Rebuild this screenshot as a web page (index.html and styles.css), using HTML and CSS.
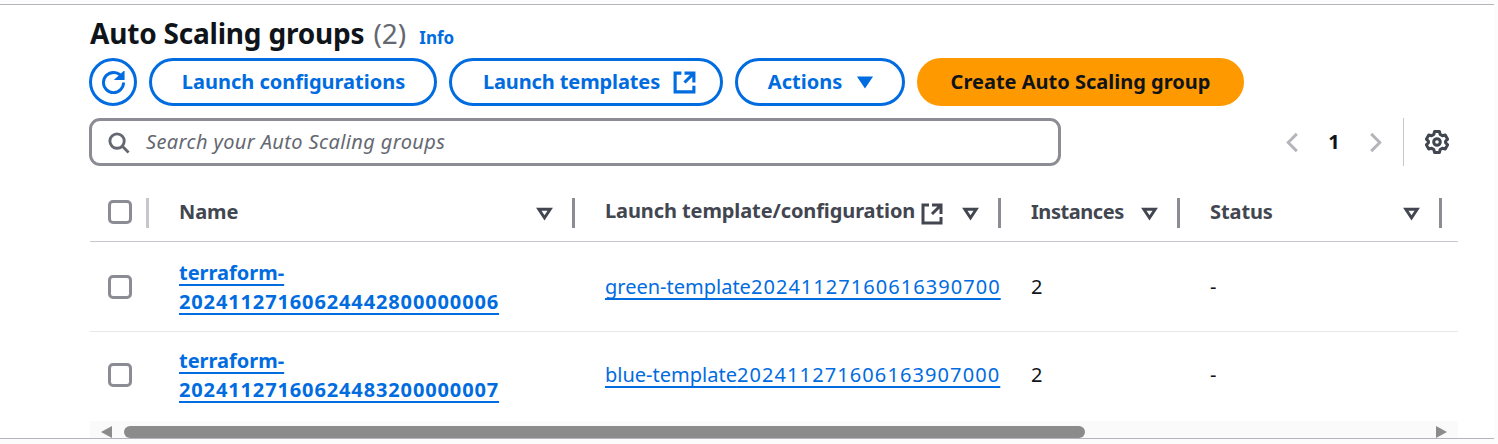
FILE: index.html
```html
<!DOCTYPE html>
<html lang="en">
<head>
<meta charset="utf-8">
<title>Auto Scaling groups</title>
<link rel="stylesheet" href="styles.css">
</head>
<body>
<main class="frame">
  <div class="content">
    <h1 class="title"><span>Auto Scaling groups</span> <span class="count">(2)</span><a class="info">Info</a></h1>
    <div class="actions">
      <button class="btn btn-icon" aria-label="Refresh">
        <svg class="icon" viewBox="0 0 16 16"><path d="M15 8c0 3.87-3.13 7-7 7s-7-3.13-7-7 3.13-7 7-7c2.79 0 5.2 1.63 6.33 4"/><path class="arrowhead" d="M15 1v4.600h-5z"/></svg>
      </button>
      <button class="btn btn-config">Launch configurations</button>
      <button class="btn btn-templates"><span class="tight">Launch templates</span>
        <svg class="icon ext-btn" viewBox="0 0 16 16"><path d="M14 8.01v-6H8M14.02 2 8 8.01M6 2.01H2v12h12v-3.99"/></svg>
      </button>
      <button class="btn btn-actions">Actions
        <svg class="icon icon-fill caret" viewBox="0 0 16 16"><path d="M4 5h8l-4 6-4-6z"/></svg>
      </button>
      <button class="btn btn-primary">Create Auto Scaling group</button>
    </div>
    <div class="tools">
      <label class="search">
        <svg class="icon search-icon" viewBox="0 0 16 16"><circle cx="7" cy="7" r="5"/><path d="m15 15-4.5-4.5"/></svg>
        <span class="placeholder">Search your Auto Scaling groups</span>
      </label>
      <div class="pager">
        <svg class="icon chev" viewBox="0 0 16 16"><path d="M11 2 5 8l6 6"/></svg>
        <span class="page">1</span>
        <svg class="icon chev" viewBox="0 0 16 16"><path d="m5 2 6 6-6 6"/></svg>
      </div>
      <div class="prefs">
        <svg class="icon gear" viewBox="0 0 16 16"><circle cx="8" cy="8" r="2.2"/><path d="M6.4 1h3.2l.5 1.9 1.5.9 1.9-.5 1.6 2.8-1.4 1.4v1l1.4 1.4-1.6 2.8-1.9-.5-1.5.9-.5 1.9H6.4l-.5-1.9-1.5-.9-1.9.5-1.6-2.8 1.4-1.4v-1L.9 6.100l1.6-2.8 1.9.5 1.500-.9z"/></svg>
      </div>
    </div>
    <div class="table">
      <div class="row head">
        <div class="cell c-check"><span class="box"></span><i class="sep sep-light"></i></div>
        <div class="cell c-name"><span class="th">Name</span><svg class="icon filter" viewBox="0 0 16 16"><path d="M4 5h8l-4 6-4-6z"/></svg><i class="sep"></i></div>
        <div class="cell c-tpl"><span class="th th-up">Launch template/configuration</span><svg class="icon ext" viewBox="0 0 16 16"><path d="M14 8.01v-6H8M14.02 2 8 8.01M6 2.01H2v12h12v-3.99"/></svg><svg class="icon filter" viewBox="0 0 16 16"><path d="M4 5h8l-4 6-4-6z"/></svg><i class="sep"></i></div>
        <div class="cell c-inst"><span class="th th-inst">Instances</span><svg class="icon filter" viewBox="0 0 16 16"><path d="M4 5h8l-4 6-4-6z"/></svg><i class="sep"></i></div>
        <div class="cell c-status"><span class="th">Status</span><svg class="icon filter" viewBox="0 0 16 16"><path d="M4 5h8l-4 6-4-6z"/></svg><i class="sep"></i></div>
      </div>
      <div class="row body-row">
        <div class="cell c-check"><span class="box"></span></div>
        <div class="cell c-name"><a class="link link-strong">terraform-<br><span class="num">20241127160624442800000006</span></a></div>
        <div class="cell c-tpl"><a class="link">green-template<span class="num">20241127160616390700</span></a></div>
        <div class="cell c-inst">2</div>
        <div class="cell c-status">-</div>
      </div>
      <div class="row body-row last">
        <div class="cell c-check"><span class="box"></span></div>
        <div class="cell c-name"><a class="link link-strong">terraform-<br><span class="num">20241127160624483200000007</span></a></div>
        <div class="cell c-tpl"><a class="link">blue-template<span class="num num-wide">202411271606163907000</span></a></div>
        <div class="cell c-inst">2</div>
        <div class="cell c-status">-</div>
      </div>
      <div class="scrollbar">
        <span class="arrow arrow-left"></span>
        <span class="thumb"></span>
        <span class="arrow arrow-right"></span>
      </div>
    </div>
  </div>
</main>
</body>
</html>
```
FILE: styles.css
```css
* { box-sizing: border-box; }
html, body { margin: 0; padding: 0; background: #fcfcfc; }
body { padding-top: 4px; height: 444px; overflow: hidden; font-family: "Noto Sans", sans-serif; font-size: 20px; color: #0f141a; }
.frame { width: 1494px; height: 435px; background: #fff; border-top: 1px solid #b4b4bb; border-bottom: 1px solid #b4b4bb; }
.content { margin-left: 89px; width: 1369px; padding-top: 6px; }
.title { margin: 0 0 0 1px; height: 47px; font-size: 28px; line-height: 45px; font-weight: 700; letter-spacing: -.2px; white-space: nowrap; }
.count { margin-left: 2px; font-weight: 400; letter-spacing: 0; color: #656871; }
.info { margin-left: 13px; font-size: 17px; font-weight: 700; letter-spacing: 0; color: #006ce0; }
.actions { display: flex; gap: 12px; height: 48px; }
.btn { display: flex; align-items: center; justify-content: center; gap: 12px; height: 48px; padding: 0 0 2px; border: 3px solid #006ce0; border-radius: 24px; background: #fff; color: #006ce0; font: 700 20px "Noto Sans", sans-serif; }
.btn-icon { width: 48px; padding: 0; }
.btn-config { width: 288px; padding-left: 1px; }
.btn-templates { width: 274px; padding-left: 8px; }
.btn-actions { width: 170px; padding-left: 4px; }
.btn-primary { width: 327px; background: #ff9900; border-color: #ff9900; color: #0f141a; }
.tight { letter-spacing: -.12px; }
.icon { width: 23px; height: 23px; fill: none; stroke: currentColor; stroke-width: 2; flex: none; }
.arrowhead { fill: currentColor; stroke-width: 1.4; }
.ext-btn { width: 25px; height: 25px; margin-top: 2px; }
.caret { width: 22px; height: 22px; margin-top: 2px; }
.icon-fill { fill: currentColor; }
.tools { display: flex; align-items: center; height: 48px; margin-top: 12px; }
.search { display: flex; align-items: center; width: 972px; height: 48px; padding-left: 15px; border: 3px solid #8c8c94; border-radius: 11px; color: #656871; }
.search-icon { margin-right: 16px; }
.placeholder { padding-bottom: 2px; font-style: italic; letter-spacing: .38px; color: #656871; }
.pager { display: flex; align-items: center; margin-left: 220px; color: #b4b4bb; }
.chev { width: 23px; height: 23px; }
.page { width: 60px; padding-bottom: 2px; text-align: center; font-weight: 700; color: #0f141a; }
.prefs { display: flex; align-items: center; height: 48px; margin-left: 16px; padding-left: 21px; border-left: 1px solid #c6c6cd; color: #424650; }
.gear { width: 24px; height: 24px; stroke-linejoin: round; margin-bottom: 1px; }
.table { margin: 24px 0 0 1px; }
.row { display: grid; grid-template-columns: 59px 426px 426px 179px 262px 16px; }
.head { height: 52px; border-bottom: 1px solid #c6c6cd; }
.body-row { height: 90px; border-bottom: 1px solid #e8e8ec; }
.body-row.last { height: 89px; padding-bottom: 4px; border-bottom: 0; }
.cell { display: flex; align-items: center; position: relative; }
.head .cell { padding-bottom: 8px; }
.c-check { padding-left: 18px; }
.c-name, .c-tpl, .c-inst, .c-status { padding-left: 30px; }
.box { display: block; width: 24px; height: 24px; border: 3px solid #8c8c94; border-radius: 5px; background: #fff; }
.th { font-weight: 700; letter-spacing: -.1px; color: #424650; }
.th-up { margin-top: -2px; }
.th-inst { letter-spacing: -.45px; }
.filter { margin: 4px 19px 0 auto; color: #424650; }
.ext { width: 24px; height: 24px; margin: 4px 0 0 5px; color: #424650; }
.sep { position: absolute; right: 0; top: 8px; width: 3px; height: 30px; background: #8c8c94; }
.sep-light { background: #c6c6cd; }
.link { color: #006ce0; line-height: 29px; text-decoration: underline; text-decoration-thickness: 2px; text-underline-offset: 4px; text-decoration-skip-ink: none; white-space: nowrap; }
.link .num { letter-spacing: 1.05px; }
.link .num-wide { letter-spacing: 1.1px; }
.link-strong { font-weight: 700; }
.link-strong .num { letter-spacing: .87px; }
.scrollbar { display: flex; align-items: flex-end; height: 17px; padding-left: 11px; background: #fafafa; }
.thumb { width: 961px; height: 12px; margin-left: 12px; border-radius: 6px; background: #8b8b8b; }
.arrow { width: 0; height: 0; border-top: 6px solid transparent; border-bottom: 6px solid transparent; }
.arrow-left { border-right: 11px solid #8b8b8b; }
.arrow-right { margin-left: 351px; border-left: 11px solid #8b8b8b; }
```
